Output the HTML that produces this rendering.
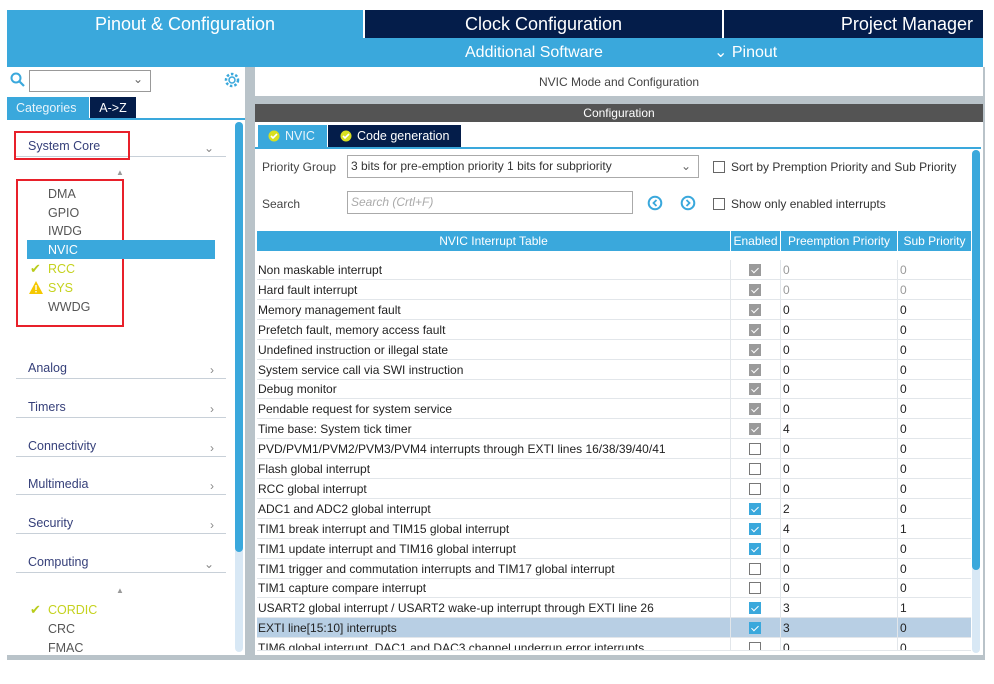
<!DOCTYPE html>
<html><head><meta charset="utf-8"><style>
*{margin:0;padding:0;box-sizing:border-box}
body{width:994px;height:684px;background:#fff;position:relative;overflow:hidden;font-family:"Liberation Sans",Arial,sans-serif;font-size:12px;color:#222}
.a{position:absolute}
.c{text-align:center}
.cat{position:absolute;left:16px;width:210px;height:22px;border-bottom:1px solid #c8d0d8;color:#36407a;font-size:12.5px;padding-left:12px;line-height:22px}
.chev{position:absolute;right:12px;top:2px;color:#888;font-size:12px}
.li{position:absolute;left:48px;font-size:12.5px;color:#555}
.row{position:absolute;left:257px;width:714px;height:20px;border-bottom:1px solid #e2e6ea;font-size:12px;line-height:21px}
.row span{position:absolute;top:0}
.cb{position:absolute;left:492px;top:4px;width:12px;height:12px;border:1px solid #777;background:#fff}
.cb.g{background:#9a9a9a;border-color:#9a9a9a}
.cb.b{background:#3aa8dc;border-color:#3aa8dc}
.cb.g::after,.cb.b::after{content:"";position:absolute;left:3px;top:1px;width:3px;height:6px;border:solid #fff;border-width:0 1.5px 1.5px 0;transform:rotate(45deg)}
.vl{position:absolute;top:0;width:1px;height:20px;background:#e2e6ea}
</style></head><body>
<div class="a" style="left:7px;top:10px;width:356px;height:28px;background:#3aa8dc;color:#fff;font-size:18px;line-height:28px" ><div class="c">Pinout &amp; Configuration</div></div>
<div class="a c" style="left:365px;top:10px;width:357px;height:28px;background:#041d4a;color:#fff;font-size:18px;line-height:28px">Clock Configuration</div>
<div class="a" style="left:724px;top:10px;width:259px;height:28px;background:#041d4a;color:#fff;font-size:18px;line-height:28px;text-align:right;padding-right:10px">Project Manager</div>
<div class="a" style="left:7px;top:38px;width:976px;height:29px;background:#3aa8dc;color:#fff;font-size:16px;line-height:29px">
<span class="a" style="left:458px">Additional Software</span><span class="a" style="left:707px">⌄ Pinout</span></div>
<div class="a" style="left:245px;top:67px;width:10px;height:590px;background:#b9c3c9"></div>
<div class="a" style="left:7px;top:655px;width:976px;height:5px;background:#b9c3c9"></div>
<div class="a" style="left:983px;top:67px;width:2px;height:593px;background:#b9c3c9"></div>
<svg class="a" style="left:10px;top:72px" width="16" height="16"><circle cx="6" cy="6" r="4.5" fill="none" stroke="#3aa8dc" stroke-width="2"/><line x1="9" y1="9" x2="14" y2="14" stroke="#3aa8dc" stroke-width="2.2"/></svg>
<div class="a" style="left:29px;top:70px;width:122px;height:22px;border:1px solid #999"><span class="a" style="right:7px;top:1px;color:#666">⌄</span></div>
<svg class="a" style="left:223px;top:71px" width="18" height="18"><circle cx="9" cy="9" r="6" fill="none" stroke="#3aa8dc" stroke-width="2.5" stroke-dasharray="2.5 2"/><circle cx="9" cy="9" r="3" fill="none" stroke="#3aa8dc" stroke-width="1.5"/></svg>
<div class="a" style="left:7px;top:97px;width:82px;height:22px;background:#3aa8dc;color:#e8f4fb;font-size:12.5px;line-height:22px;padding-left:9px">Categories</div>
<div class="a c" style="left:90px;top:97px;width:46px;height:22px;background:#041d4a;color:#fff;font-size:12.5px;line-height:22px">A-&gt;Z</div>
<div class="a" style="left:7px;top:118px;width:238px;height:2px;background:#3aa8dc"></div>
<div class="a" style="left:235px;top:122px;width:8px;height:530px;background:#d8e8f5;border-radius:4px"></div>
<div class="a" style="left:235px;top:122px;width:8px;height:430px;background:#3aa8dc;border-radius:4px"></div>
<div class="cat" style="top:135px">System Core<span class="chev">⌄</span></div>
<div class="a" style="left:14px;top:131px;width:116px;height:29px;border:2px solid #e8202a"></div>
<div class="a" style="left:116px;top:168px;color:#999;font-size:8px">▲</div>
<div class="a" style="left:16px;top:179px;width:108px;height:148px;border:2px solid #e8202a"></div>
<div class="li" style="top:187px">DMA</div>
<div class="li" style="top:206px">GPIO</div>
<div class="li" style="top:224px">IWDG</div>
<div class="a" style="left:27px;top:240px;width:188px;height:19px;background:#3aa8dc"></div>
<div class="li" style="top:243px;color:#fff">NVIC</div>
<div class="a" style="left:30px;top:261px;color:#b8cc1a;font-size:13px">✔</div>
<div class="li" style="top:262px;color:#c5d21e">RCC</div>
<svg class="a" style="left:29px;top:281px" width="14" height="13"><path d="M7 0L14 13H0Z" fill="#f5c800"/><rect x="6.3" y="4" width="1.4" height="5" fill="#fff"/><rect x="6.3" y="10" width="1.4" height="1.4" fill="#fff"/></svg>
<div class="li" style="top:281px;color:#c5d21e">SYS</div>
<div class="li" style="top:300px">WWDG</div>
<div class="cat" style="top:357px">Analog<span class="chev">›</span></div>
<div class="cat" style="top:396px">Timers<span class="chev">›</span></div>
<div class="cat" style="top:435px">Connectivity<span class="chev">›</span></div>
<div class="cat" style="top:473px">Multimedia<span class="chev">›</span></div>
<div class="cat" style="top:512px">Security<span class="chev">›</span></div>
<div class="cat" style="top:551px">Computing<span class="chev">⌄</span></div>
<div class="a" style="left:116px;top:586px;color:#999;font-size:8px">▲</div>
<div class="a" style="left:30px;top:602px;color:#b8cc1a;font-size:13px">✔</div>
<div class="li" style="top:603px;color:#c5d21e">CORDIC</div>
<div class="li" style="top:622px">CRC</div>
<div class="li" style="top:641px">FMAC</div>
<div class="a" style="left:7px;top:652px;width:238px;height:3px;background:#fff"></div>
<div class="a c" style="left:255px;top:68px;width:728px;height:28px;line-height:28px;color:#444;font-size:12px">NVIC Mode and Configuration</div>
<div class="a" style="left:255px;top:96px;width:728px;height:8px;background:#b9c3c9"></div>
<div class="a c" style="left:255px;top:104px;width:728px;height:18px;background:#545454;color:#fff;line-height:18px">Configuration</div>
<div class="a" style="left:258px;top:125px;width:69px;height:22px;background:#3aa8dc;color:#e8f4fb;font-size:12.5px;line-height:22px;padding-left:27px">NVIC</div>
<div class="a" style="left:328px;top:125px;width:133px;height:22px;background:#041d4a;color:#fff;font-size:12.5px;line-height:22px;padding-left:29px">Code generation</div>
<svg class="a" style="left:268px;top:130px" width="12" height="12"><circle cx="6" cy="6" r="5.5" fill="#d8e020"/><path d="M3 6l2 2 4-4" fill="none" stroke="#fff" stroke-width="1.6"/></svg>
<svg class="a" style="left:340px;top:130px" width="12" height="12"><circle cx="6" cy="6" r="5.5" fill="#d8e020"/><path d="M3 6l2 2 4-4" fill="none" stroke="#fff" stroke-width="1.6"/></svg>
<div class="a" style="left:255px;top:147px;width:726px;height:2px;background:#3aa8dc"></div>
<div class="a" style="left:262px;top:160px;color:#444">Priority Group</div>
<div class="a" style="left:347px;top:155px;width:352px;height:23px;border:1px solid #aaa;line-height:21px;padding-left:3px;color:#333">3 bits for pre-emption priority 1 bits for subpriority<span class="a" style="right:7px;color:#666">⌄</span></div>
<div class="a" style="left:713px;top:161px;width:12px;height:12px;border:1px solid #666"></div>
<div class="a" style="left:731px;top:160px;color:#333">Sort by Premption Priority and Sub Priority</div>
<div class="a" style="left:262px;top:197px;color:#444">Search</div>
<div class="a" style="left:347px;top:191px;width:286px;height:23px;border:1px solid #aaa;line-height:21px;padding-left:3px;color:#aaa;font-style:italic">Search (Crtl+F)</div>
<svg class="a" style="left:647px;top:195px" width="16" height="16"><circle cx="8" cy="8" r="6.3" fill="none" stroke="#3aa8dc" stroke-width="2"/><path d="M9.5 5L6.5 8l3 3" fill="none" stroke="#3aa8dc" stroke-width="1.8"/></svg>
<svg class="a" style="left:680px;top:195px" width="16" height="16"><circle cx="8" cy="8" r="6.3" fill="none" stroke="#3aa8dc" stroke-width="2"/><path d="M6.5 5l3 3-3 3" fill="none" stroke="#3aa8dc" stroke-width="1.8"/></svg>
<div class="a" style="left:713px;top:198px;width:12px;height:12px;border:1px solid #666"></div>
<div class="a" style="left:731px;top:197px;color:#333">Show only enabled interrupts</div>
<div class="a" style="left:972px;top:150px;width:8px;height:503px;background:#d8e8f5;border-radius:4px"></div>
<div class="a" style="left:972px;top:150px;width:8px;height:420px;background:#3aa8dc;border-radius:4px"></div>
<div class="a c" style="left:257px;top:231px;width:473px;height:20px;background:#3aa8dc;color:#fff;line-height:20px">NVIC Interrupt Table</div>
<div class="a c" style="left:731px;top:231px;width:49px;height:20px;background:#3aa8dc;color:#fff;line-height:20px">Enabled</div>
<div class="a c" style="left:781px;top:231px;width:116px;height:20px;background:#3aa8dc;color:#fff;line-height:20px">Preemption Priority</div>
<div class="a c" style="left:898px;top:231px;width:73px;height:20px;background:#3aa8dc;color:#fff;line-height:20px">Sub Priority</div>
<div id="rows"></div>
<script>
var R=[["Non maskable interrupt","g","0","0",1],["Hard fault interrupt","g","0","0",1],["Memory management fault","g","0","0"],["Prefetch fault, memory access fault","g","0","0"],["Undefined instruction or illegal state","g","0","0"],["System service call via SWI instruction","g","0","0"],["Debug monitor","g","0","0"],["Pendable request for system service","g","0","0"],["Time base: System tick timer","g","4","0"],["PVD/PVM1/PVM2/PVM3/PVM4 interrupts through EXTI lines 16/38/39/40/41","u","0","0"],["Flash global interrupt","u","0","0"],["RCC global interrupt","u","0","0"],["ADC1 and ADC2 global interrupt","b","2","0"],["TIM1 break interrupt and TIM15 global interrupt","b","4","1"],["TIM1 update interrupt and TIM16 global interrupt","b","0","0"],["TIM1 trigger and commutation interrupts and TIM17 global interrupt","u","0","0"],["TIM1 capture compare interrupt","u","0","0"],["USART2 global interrupt / USART2 wake-up interrupt through EXTI line 26","b","3","1"],["EXTI line[15:10] interrupts","b","3","0",0,1],["TIM6 global interrupt, DAC1 and DAC3 channel underrun error interrupts","u","0","0"]];
var h="";R.forEach(function(r,i){var t=260+i*19.9;var col=r[4]?"#999":"#222";
h+='<div class="row" style="top:'+t+'px;'+(r[5]?'background:#b8cfe4;':'')+(i==19?'height:13px;overflow:hidden;':'')+'"><span style="left:1px">'+r[0]+'</span><div class="vl" style="left:473px"></div><div class="vl" style="left:523px"></div><div class="vl" style="left:640px"></div><div class="cb '+r[1]+'"></div><span style="left:526px;color:'+col+'">'+r[2]+'</span><span style="left:643px;color:'+col+'">'+r[3]+'</span></div>';});
document.getElementById("rows").innerHTML=h;
</script>
</body></html>
